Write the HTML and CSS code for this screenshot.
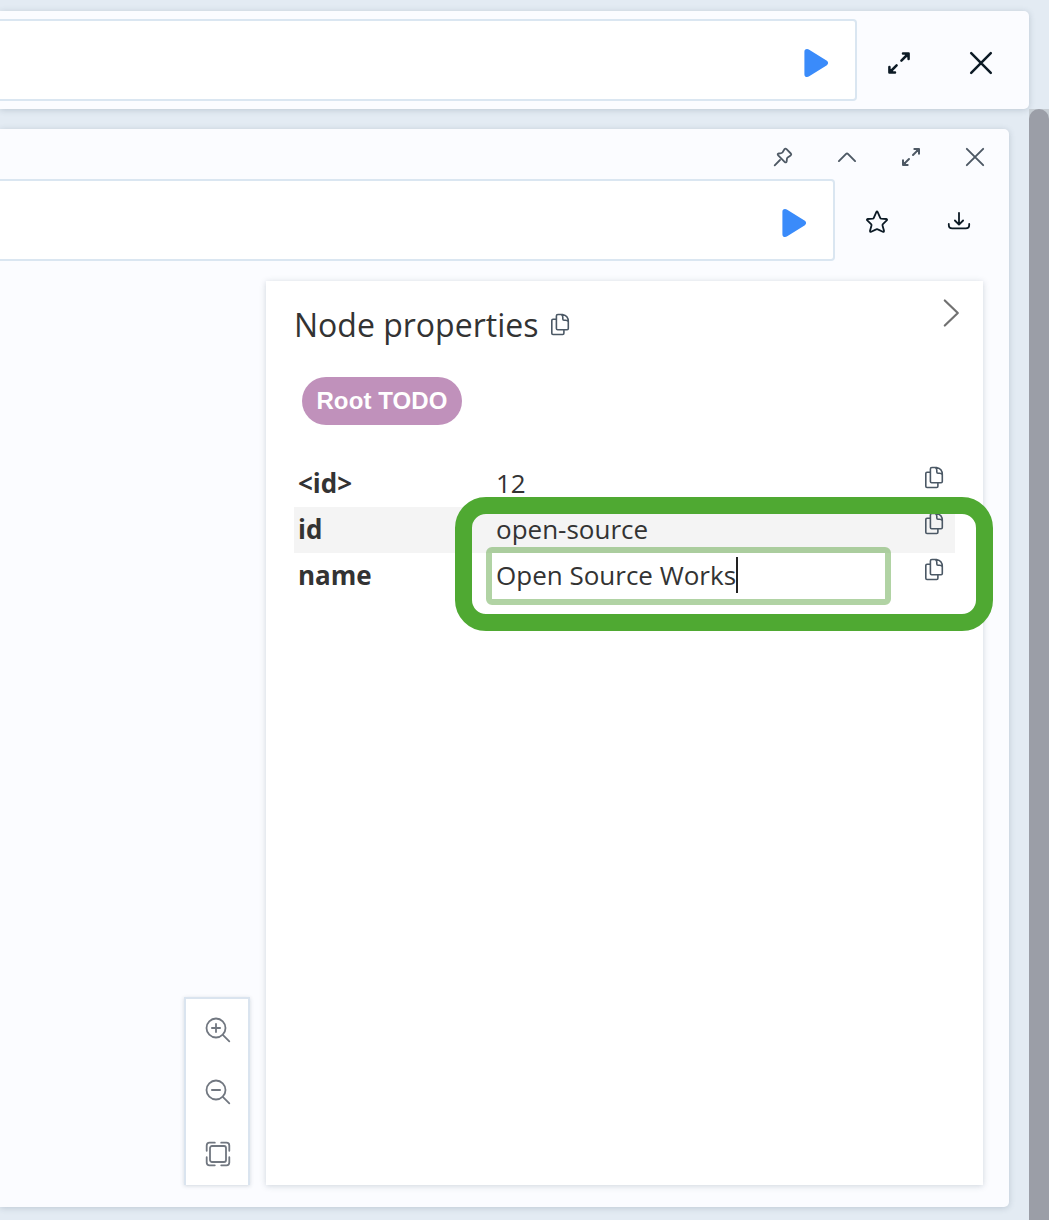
FILE: index.html
```html
<!DOCTYPE html>
<html lang="en">
<head>
<meta charset="utf-8">
<title>Node properties</title>
<link rel="stylesheet" href="styles.css">
</head>
<body>
<svg class="sprite" aria-hidden="true">
  <symbol id="copy" viewBox="0 0 20 24">
    <path d="M6.2 6.2H3Q1.8 6.2 1.8 7.4V20.3Q1.8 21.5 3 21.5H12.7Q13.9 21.5 13.9 20.3V17.2"/>
    <path d="M7.9 1.5H12.5Q18.3 2.5 18.3 8.5V15.6Q18.3 16.8 17.1 16.8H7.6Q6.4 16.8 6.4 15.6V3Q6.4 1.5 7.9 1.5ZM11.2 1.5Q12.8 2.2 12.8 4.3V6Q12.8 7.2 14 7.2H15.6Q17.7 7.2 18.3 8.8"/>
  </symbol>
  <symbol id="expand" viewBox="0 0 24 24">
    <path d="M14.4 9.6L20 4M9.6 14.4L4 20M16 2.4H21.6V8M2.4 16V21.6H8M19 3.4L20.6 5M3.4 19L5 20.6"/>
  </symbol>
  <symbol id="close" viewBox="0 0 24 24"><path d="M2.2 2.2L21.8 21.8M21.8 2.2L2.2 21.8"/></symbol>
  <symbol id="play" viewBox="0 0 26 30"><path d="M1.4 3.8Q1.4 1 4 1Q5.2 1 6.2 1.7L23.9 12.8Q26.3 15 23.9 17.2L6.2 28.3Q5.2 29 4 29Q1.4 29 1.4 26.2Z"/></symbol>
</svg>
<div class="page">
  <section class="command card">
    <div class="editor"><svg class="play"><use href="#play"/></svg></div>
    <svg class="icon expand-lg"><use href="#expand"/></svg>
    <svg class="icon close-lg"><use href="#close"/></svg>
  </section>
  <div class="stream">
    <section class="frame card">
      <header class="titlebar">
        <svg class="icon pin" viewBox="0 0 20 20"><path d="M1.7 18.3L7 13M11.6 2.1Q12.4 1.2 13.5 2.2L17.8 6.5Q18.8 7.6 17.6 8.4L14.7 10.4Q13.9 11 13.9 12L13.7 14.2Q13.2 16.4 11.6 14.8L5.2 8.4Q3.9 6.9 5.9 6.5L8 6.2Q9 6 9.6 5.2Z"/></svg>
        <svg class="icon chevron" viewBox="0 0 20 20"><path d="M1.9 14.1L9.1 6.9Q10 6 10.9 6.9L18.1 14.1"/></svg>
        <svg class="icon expand-sm"><use href="#expand"/></svg>
        <svg class="icon close-sm"><use href="#close"/></svg>
      </header>
      <div class="editor-row">
        <div class="editor"><svg class="play"><use href="#play"/></svg></div>
        <svg class="icon star" viewBox="0 0 24 24"><path d="M11.3 2.2Q12 .8 12.7 2.2L15.2 7.8Q15.5 8.5 16.3 8.6L21.2 9Q22.7 9.3 21.7 10.4L17.9 14.1Q17.3 14.7 17.5 15.4L19 20.7Q19.2 22.2 17.8 21.7L12.8 19.4Q12 19 11.2 19.4L6.2 21.7Q4.8 22.2 5 20.7L6.5 15.4Q6.7 14.7 6.1 14.1L2.3 10.4Q1.3 9.3 2.8 9L7.7 8.6Q8.5 8.5 8.8 7.8Z"/></svg>
        <svg class="icon download" viewBox="0 0 24 20"><path d="M12 1.8V13.4M7.9 9.5L12 13.6L16.1 9.5M1.8 13V14Q1.8 17.4 5.2 17.4H18.8Q22.2 17.4 22.2 14V13"/></svg>
      </div>
      <div class="result">
        <div class="zoom">
          <svg class="icon" viewBox="0 0 26 26"><circle cx="11" cy="11" r="9.5"/><path d="M17.8 17.8L24.3 24.3M6.9 11H15.1M11 6.9V15.1"/></svg>
          <svg class="icon" viewBox="0 0 26 26"><circle cx="11" cy="11" r="9.5"/><path d="M17.8 17.8L24.3 24.3M6.9 11H15.1"/></svg>
          <svg class="icon" viewBox="0 0 26 26"><rect x="5" y="5" width="16" height="16" rx="2"/><path d="M1.7 9.8V4.5Q1.7 1.7 4.5 1.7H9.8M16.2 1.7H21.5Q24.3 1.7 24.3 4.5V9.8M24.3 16.2V21.5Q24.3 24.3 21.5 24.3H16.2M9.8 24.3H4.5Q1.7 24.3 1.7 21.5V16.2"/></svg>
        </div>
        <aside class="panel">
          <svg class="icon collapse" viewBox="0 0 18 30"><path d="M2.8 2.5L15.8 15L2.8 27.5"/></svg>
          <h1 class="title"><span>Node properties</span><svg class="icon copy"><use href="#copy"/></svg></h1>
          <span class="label">Root TODO</span>
          <div class="properties">
            <div class="row"><b class="key">&lt;id&gt;</b><span class="value">12</span><svg class="icon copy"><use href="#copy"/></svg></div>
            <div class="row shaded"><b class="key">id</b><span class="value">open-source</span><svg class="icon copy"><use href="#copy"/></svg></div>
            <div class="row"><b class="key">name</b><span class="value editing">Open Source Works<i class="caret"></i></span><svg class="icon copy"><use href="#copy"/></svg></div>
            <div class="highlight"></div>
          </div>
        </aside>
      </div>
    </section>
    <div class="scrollbar"><div class="thumb"></div></div>
  </div>
</div>
</body>
</html>
```
FILE: styles.css
```css
*, *::before { box-sizing: border-box; }
body { margin: 0; background: #e3ebf3; font-family: "Open Sans", "Noto Sans", sans-serif; color: #333; }
.sprite { position: absolute; width: 0; height: 0; }
.page { height: 1220px; padding-top: 11px; overflow: hidden; display: flex; flex-direction: column; }
.card { background: #fbfcff; box-shadow: 0 1px 6px rgba(52, 73, 94, .22); }
.icon { flex: none; fill: none; stroke: #0c1a25; stroke-width: 2; stroke-linecap: round; stroke-linejoin: round; }
.editor { height: 82px; background: #fff; border: 2px solid #dae6f1; border-left: 0; border-radius: 0 4px 4px 0; display: flex; justify-content: flex-end; align-items: center; padding-right: 26px; }
.play { width: 26px; height: 30px; fill: #3a8bfa; margin-top: 5px; }

.command { width: 1029px; height: 98px; border-radius: 0 5px 5px 0; display: flex; align-items: center; }
.command .editor { width: 857px; }
.expand-lg { width: 24px; height: 24px; margin: 6px 0 0 30px; stroke-width: 2.5; }
.close-lg { width: 24px; height: 24px; margin: 6px 0 0 58px; stroke-width: 2.5; }

.stream { flex: 1; display: flex; align-items: flex-start; }
.frame { width: 1009px; height: 1078px; margin: 20px 20px 0 0; border-radius: 0 5px 5px 0; }
.titlebar { height: 50px; display: flex; justify-content: flex-end; align-items: center; padding: 6px 24px 0 0; gap: 44px; }
.titlebar .icon { width: 20px; height: 20px; stroke: #4d5864; }
.titlebar .pin { stroke-width: 1.8; }
.titlebar .chevron { stroke-width: 1.9; }
.titlebar .close-sm { stroke-width: 2.3; }
.titlebar .expand-sm { stroke-width: 2.4; }
.editor-row { display: flex; align-items: center; height: 82px; }
.editor-row .editor { width: 835px; }
.star { width: 24px; height: 24px; margin: 3px 0 0 30px; stroke-width: 1.8; }
.download { width: 24px; height: 20px; margin: 1px 0 0 58px; stroke-width: 1.8; }

.result { display: flex; justify-content: flex-end; align-items: flex-end; gap: 16px; padding: 20px 26px 0 0; }
.zoom { width: 66px; height: 188px; background: #fff; border: 2px solid #dae4ef; border-bottom: 0; box-shadow: 0 1px 4px rgba(52, 73, 94, .2); display: flex; flex-direction: column; align-items: center; gap: 36px; padding: 18px 0 0 2px; }
.zoom .icon { width: 26px; height: 26px; stroke: #717780; stroke-width: 1.8; }

.panel { position: relative; width: 717px; height: 904px; background: #fff; padding: 21px 28px; box-shadow: 0 1px 6px rgba(52, 73, 94, .22); }
.collapse { position: absolute; top: 17px; right: 23px; width: 18px; height: 30px; stroke: #717171; stroke-width: 2.2; }
.title { margin: 0; height: 46px; display: flex; align-items: center; gap: 12px; font-size: 32px; font-weight: 400; line-height: 46px; }
.copy { width: 20px; height: 24px; stroke: #4b5865; stroke-width: 1.6; }
.label { display: block; width: 160px; height: 48px; margin: 29px 0 0 8px; border-radius: 24px; background: #c091bb; color: #fff; font: bold 24px/48px "Liberation Sans", Arial, sans-serif; letter-spacing: .1px; text-align: center; }
.properties { position: relative; width: 661px; margin-top: 36px; }
.row { height: 46px; display: flex; font-size: 26px; line-height: 44px; padding-left: 4px; }
.row.shaded { background: #f4f4f4; }
.key { width: 198px; font-weight: 700; }
.value { flex: 1; }
.row .copy { margin: 5px 11px 0 0; }
.editing { position: relative; display: flex; align-items: flex-start; }
.editing::before { content: ""; position: absolute; top: -6px; left: -10px; width: 405px; height: 58px; border: 6px solid rgba(78, 154, 48, .44); border-radius: 6px; }
.caret { width: 2px; height: 36px; margin-top: 4px; background: #222; }
.highlight { position: absolute; left: 161px; top: 36px; width: 538px; height: 134px; border: 17px solid #4fa932; border-radius: 31px; }

.scrollbar { width: 20px; height: 1111px; background: #c6cdd3; }
.thumb { height: 100%; background: #9b9ea7; border-radius: 10px 10px 0 0; }
```
